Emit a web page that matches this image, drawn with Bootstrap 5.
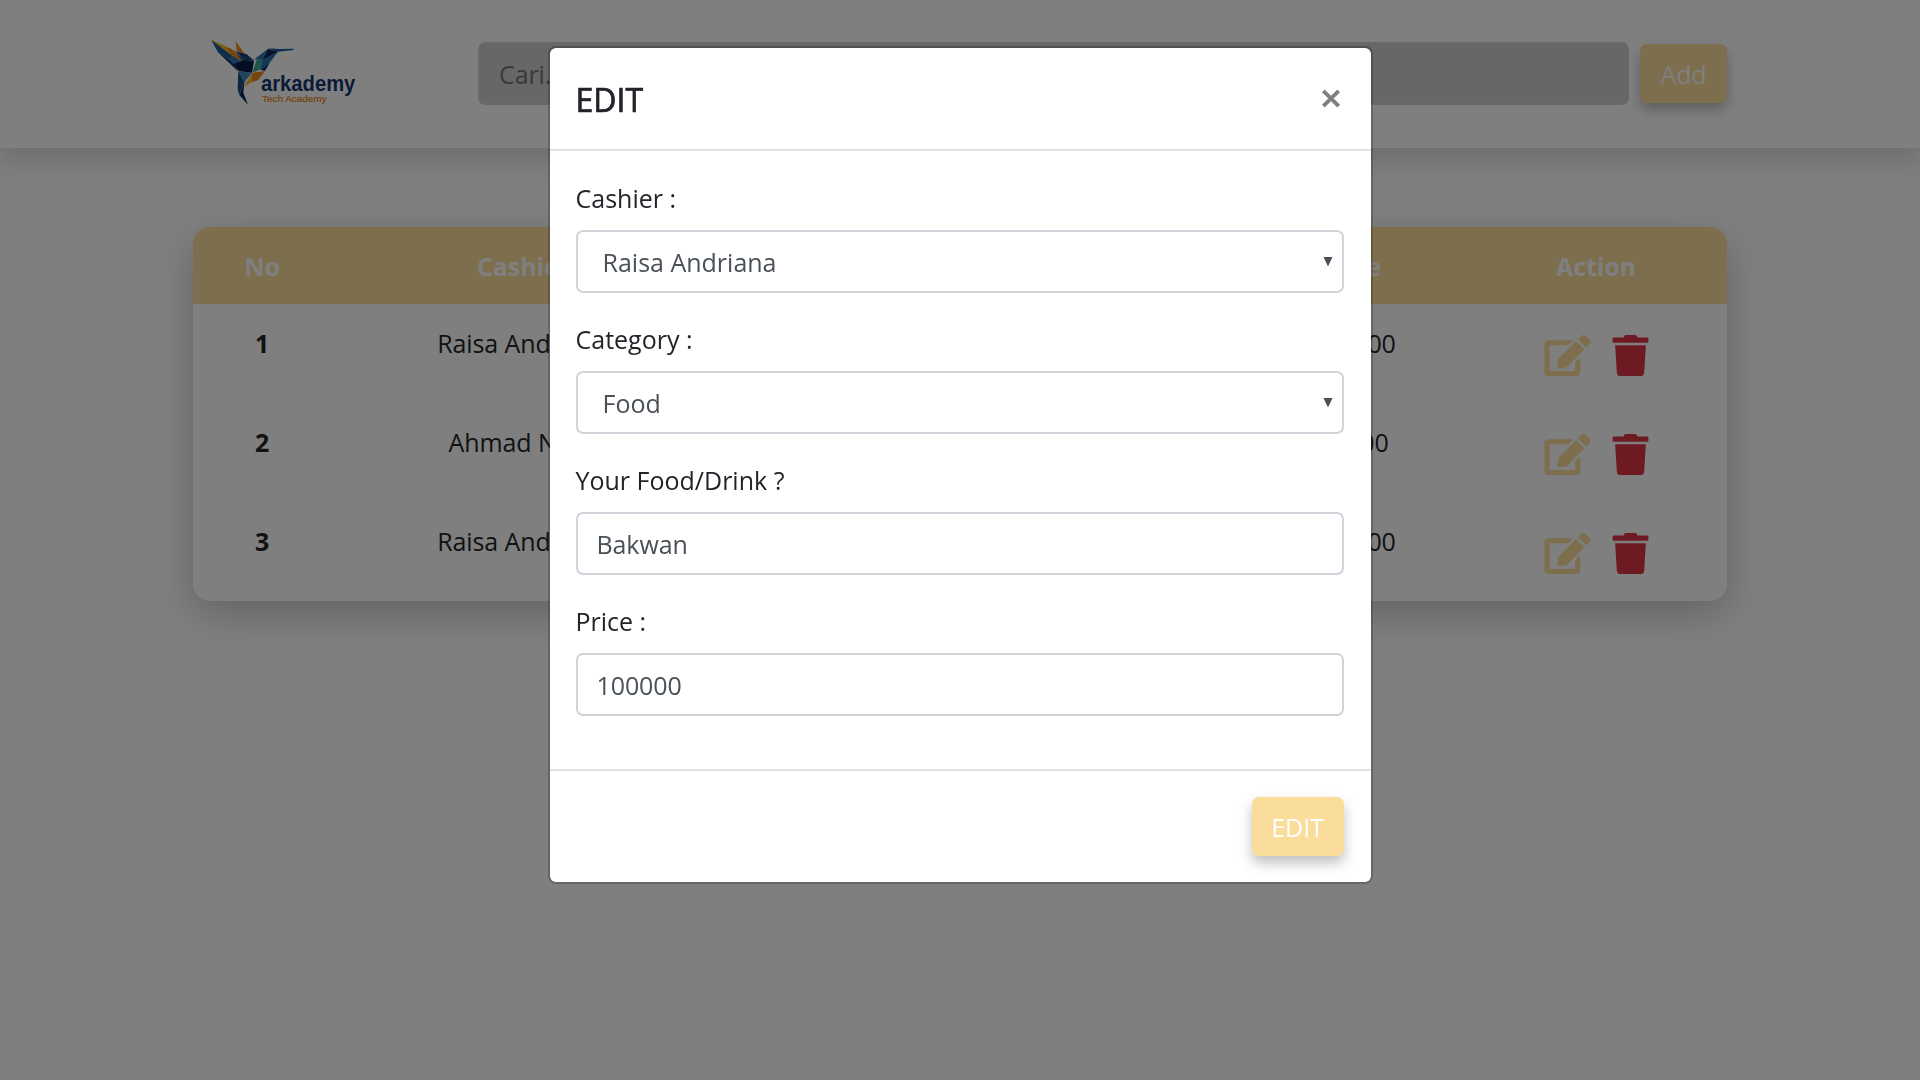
<!DOCTYPE html>
<html lang="id">
<head>
<meta charset="utf-8">
<meta name="viewport" content="width=device-width, initial-scale=1">
<title>Arkademy</title>
<link rel="stylesheet" href="https://cdn.jsdelivr.net/npm/bootstrap@5.3.0/dist/css/bootstrap.min.css">
<style>
  body { font: 400 25px/40px "Open Sans", "Noto Sans", sans-serif; letter-spacing: -.1px; color: #212529; min-height: 100vh; }
  .page-width { width: 1534px; padding: 0; }
  .topbar { height: 148px; box-shadow: 0 13px 26px rgba(0,0,0,.15); }
  .topbar-row { padding-top: 42px; }
  .brand-logo { width: 200px; height: 110px; margin: -22px 88px 0 -3px; }
  .form-control { height: 63px; border: 2px solid #ced4da; border-radius: 7px; padding: 6px 19px 6px 19px; font-size: 25px; line-height: 1.5; color: #495057; letter-spacing: inherit; }
  .search-box { background: #cecece; margin-right: 11px; width: 1151px; }
  .search-box::placeholder { color: #6c757d; }
  .btn-sand { --bs-btn-bg: #fadc9b; --bs-btn-color: #fff; background: #fadc9b; color: #fff; border: 0; border-radius: 7px; height: 59px; font-size: 25px; line-height: 38px; padding: 0; letter-spacing: inherit; box-shadow: 0 7px 13px rgba(0,0,0,.25); }
  .btn-add { width: 87px; margin-top: 2px; }
  .btn-edit { width: 92px; }
  .order-panel { margin-top: 79px; border-radius: 17px; overflow: hidden; box-shadow: 0 13px 40px rgba(0,0,0,.22); }
  .order-table { table-layout: fixed; --bs-table-color: #212529; }
  .order-table > :not(caption) > * > * { border: 0; padding: 0; }
  .order-table th, .order-table td { text-align: center; vertical-align: top; }
  .order-table thead th { background: #fadc9b; color: #fff; height: 77px; padding-top: 19px; }
  .order-table tbody tr { height: 99px; }
  .order-table tbody th, .order-table tbody td { padding-top: 19px; }
  .order-table tbody td.act-cell { padding-top: 31px; }
  .acts { gap: 21px; }
  .acts svg { height: 41px; display: block; }
  .modal-backdrop { opacity: .5; }
  .modal-dialog { width: 825px; max-width: none; margin: 46px auto 0; }
  .modal-content { border: 2px solid rgba(0,0,0,.2); border-radius: 8px; height: 838px; color: #212529; background-clip: padding-box; }
  .modal-header { height: 103px; padding: 0 27px 0 26px; border-bottom: 2px solid #dee2e6; }
  .modal-title { font-size: 32px; font-weight: 500; line-height: 1.5; letter-spacing: 0; padding-top: 2px; -webkit-text-stroke: .7px #212529; }
  .close-x { width: 26px; height: 26px; }
  .modal-body { padding: 28px 27px 0 26px; }
  .field { height: 141px; }
  .field label { display: block; height: 49px; margin-bottom: 2px; line-height: 38px; letter-spacing: 0; }
  .field select.form-control { padding: 8px 19px 6px 25px; letter-spacing: 0; }
  .caret { position: absolute; right: 11px; top: 27px; width: 10px; height: 10px; }
  .modal-footer { height: 113px; padding: 0 27px 0 26px; border-top: 2px solid #dee2e6; }
  .modal-footer > * { margin: 0; }
</style>
<script src="https://cdn.jsdelivr.net/npm/bootstrap@5.3.0/dist/js/bootstrap.bundle.min.js"></script>
</head>
<body>
<svg width="0" height="0" class="d-none">
  <symbol id="i-edit" viewBox="0 0 576 512"><path d="M402.6 83.2l90.2 90.2c3.8 3.8 3.8 10 0 13.8L274.4 405.6l-92.8 10.3c-12.4 1.4-22.9-9.1-21.5-21.5l10.3-92.8L388.8 83.2c3.8-3.8 10-3.8 13.8 0zm162-22.9l-48.8-48.8c-15.2-15.2-39.9-15.2-55.2 0l-35.4 35.4c-3.8 3.8-3.8 10 0 13.8l90.2 90.2c3.8 3.8 10 3.8 13.8 0l35.4-35.4c15.2-15.3 15.2-40 0-55.2zM384 346.2V448H64V128h229.8c3.2 0 6.2-1.3 8.5-3.5l40-40c7.6-7.6 2.2-20.5-8.5-20.5H48C21.5 64 0 85.5 0 112v352c0 26.5 21.5 48 48 48h352c26.5 0 48-21.5 48-48V306.2c0-10.7-12.9-16-20.5-8.5l-40 40c-2.2 2.3-3.5 5.3-3.5 8.5z"/></symbol>
  <symbol id="i-trash" viewBox="0 0 448 512"><path d="M432 32H312l-9.4-18.7A24 24 0 0 0 281.1 0H166.8a23.72 23.72 0 0 0-21.4 13.3L136 32H16A16 16 0 0 0 0 48v32a16 16 0 0 0 16 16h416a16 16 0 0 0 16-16V48a16 16 0 0 0-16-16zM53.2 467a48 48 0 0 0 47.9 45h245.8a48 48 0 0 0 47.9-45L416 128H32z"/></symbol>
</svg>

<header class="topbar bg-white">
  <div class="page-width mx-auto d-flex align-items-start topbar-row">
    <svg class="brand-logo flex-shrink-0" viewBox="0 0 600 330">
      <path fill="#f08a1d" d="M137 64L166 104 140 92z"/>
      <path fill="#1d4f8c" d="M64 61L131 92 165 119 158 127 126 121z"/>
      <path fill="#f6b21b" d="M64 61L112 81 126 108z"/>
      <path fill="#f08a1d" d="M112 81L136 94 158 127 126 108z"/>
      <path fill="#1b5c9c" d="M64 61L126 108 116 117 84 97z"/>
      <path fill="#0d3263" d="M84 97L116 117 126 122 139 149z"/>
      <path fill="#2677b8" d="M126 108L158 127 128 132 116 117z"/>
      <path fill="#0d3263" d="M116 117L128 132 148 154 139 149z"/>
      <path fill="#061d48" d="M128 132L165 120 192 122 186 158 148 154z"/>
      <path fill="#153f78" d="M136 94L170 103 193 122 165 120z"/>
      <path fill="#2a78b4" d="M193 118L234 86 217 121z"/>
      <path fill="#0a2857" d="M234 86L265 95 217 121z"/>
      <path fill="#1e5d99" d="M234 85L268 87 310 86 311 90 263 95z"/>
      <path fill="#38ad93" d="M200 119L217 121 211 148 187 158z"/>
      <path fill="#2272ae" d="M217 121L264 95 240 127 211 149z"/>
      <path fill="#10376d" d="M211 149L240 127 225 153z"/>
      <path fill="#f08a1d" d="M187 158L225 153 205 180 184 187z"/>
      <path fill="#f7bd24" d="M186 160L184 187 161 202z"/>
      <path fill="#3c88bd" d="M145 154L186 158 163 187z"/>
      <path fill="#164a86" d="M145 154L163 187 147 225 143 205z"/>
      <path fill="#092652" d="M163 187L160 218 174 254 148 225z"/>
      <path fill="#2572ad" d="M148 225L158 232 174 254z"/>
      <text x="213" y="212" font-family="Liberation Sans, sans-serif" font-weight="700" font-size="64" fill="#12376f" textLength="283" lengthAdjust="spacingAndGlyphs" letter-spacing="0">arkademy</text>
      <text x="216" y="245" font-family="Liberation Sans, sans-serif" font-size="29" fill="#e88420" stroke="#e88420" stroke-width=".6" textLength="194" lengthAdjust="spacingAndGlyphs" letter-spacing="0">Tech Academy</text>
    </svg>
    <input class="form-control search-box flex-shrink-0" type="text" placeholder="Cari...">
    <button class="btn btn-sand btn-add flex-shrink-0" type="button">Add</button>
  </div>
</header>

<main class="page-width mx-auto">
  <div class="order-panel bg-white">
    <table class="table order-table mb-0">
      <colgroup><col style="width:138px"><col style="width:385px"><col style="width:262px"><col style="width:257px"><col style="width:230px"><col></colgroup>
      <thead><tr><th>No</th><th>Cashier</th><th>Product</th><th>Category</th><th>Price</th><th>Action</th></tr></thead>
      <tbody>
        <tr><th>1</th><td>Raisa Andriana</td><td>Bakwan</td><td>Food</td><td>100.000</td>
          <td class="act-cell"><div class="acts d-flex justify-content-center"><svg width="47" fill="#fadc9b"><use href="#i-edit"/></svg><svg width="37" fill="#dc3545"><use href="#i-trash"/></svg></div></td></tr>
        <tr><th>2</th><td>Ahmad Nizar</td><td>Es Teh</td><td>Drink</td><td>10.000</td>
          <td class="act-cell"><div class="acts d-flex justify-content-center"><svg width="47" fill="#fadc9b"><use href="#i-edit"/></svg><svg width="37" fill="#dc3545"><use href="#i-trash"/></svg></div></td></tr>
        <tr><th>3</th><td>Raisa Andriana</td><td>Bakwan</td><td>Food</td><td>100.000</td>
          <td class="act-cell"><div class="acts d-flex justify-content-center"><svg width="47" fill="#fadc9b"><use href="#i-edit"/></svg><svg width="37" fill="#dc3545"><use href="#i-trash"/></svg></div></td></tr>
      </tbody>
    </table>
  </div>
</main>

<div class="modal-backdrop"></div>
<div class="modal d-block" tabindex="-1">
  <div class="modal-dialog">
    <form class="modal-content">
      <div class="modal-header d-flex align-items-center justify-content-between">
        <h5 class="modal-title">EDIT</h5>
        <svg class="close-x" viewBox="0 0 26 26" stroke="#7f7f7f" stroke-width="3.8"><path d="M5.3 4.8L20.7 20.2M20.7 4.8L5.3 20.2"/></svg>
      </div>
      <div class="modal-body">
        <div class="field"><label for="cashier">Cashier :</label>
          <div class="position-relative"><select id="cashier" class="form-control"><option>Raisa Andriana</option></select><svg class="caret" viewBox="0 0 10 10" fill="#495057"><path d="M.5 0h9L5 9.5z"/></svg></div></div>
        <div class="field"><label for="category">Category :</label>
          <div class="position-relative"><select id="category" class="form-control"><option>Food</option></select><svg class="caret" viewBox="0 0 10 10" fill="#495057"><path d="M.5 0h9L5 9.5z"/></svg></div></div>
        <div class="field"><label for="product">Your Food/Drink ?</label><input id="product" class="form-control" type="text" value="Bakwan"></div>
        <div class="field"><label for="price">Price :</label><input id="price" class="form-control" type="text" value="100000"></div>
      </div>
      <div class="modal-footer d-flex justify-content-end align-items-center">
        <button class="btn btn-sand btn-edit" type="button">EDIT</button>
      </div>
    </form>
  </div>
</div>
</body>
</html>
